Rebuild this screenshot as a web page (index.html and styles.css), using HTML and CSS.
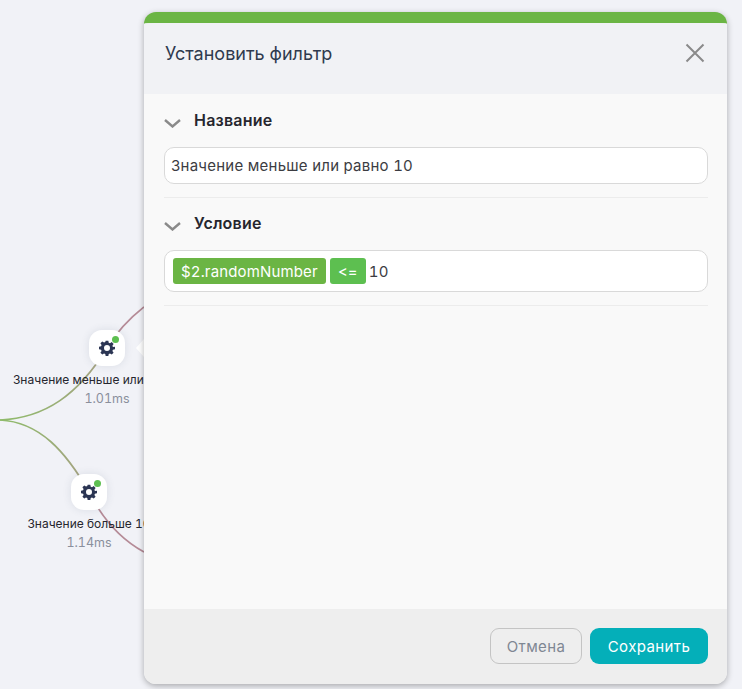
FILE: index.html
```html
<!DOCTYPE html>
<html lang="ru">
<head>
<meta charset="utf-8">
<title>Установить фильтр</title>
<link rel="stylesheet" href="styles.css">
</head>
<body>
<div class="canvas">
  <svg class="edges" width="144" height="689" viewBox="0 0 144 689" fill="none" stroke-width="1.700">
    <defs>
      <linearGradient id="g1" gradientUnits="userSpaceOnUse" x1="0" y1="420" x2="107" y2="348">
        <stop offset="0" stop-color="#8fbb6b"/><stop offset="1" stop-color="#a89f85"/>
      </linearGradient>
      <linearGradient id="g2" gradientUnits="userSpaceOnUse" x1="0" y1="420" x2="89" y2="492">
        <stop offset="0" stop-color="#8fbb6b"/><stop offset="1" stop-color="#a89f85"/>
      </linearGradient>
    </defs>
    <path d="M0 420 C45 418 78 395 107 348" stroke="url(#g1)"/>
    <path d="M0 420 C40 422 66 452 89 492" stroke="url(#g2)"/>
    <path d="M107 348 C118 330 130 318 144 307" stroke="#b58b97"/>
    <path d="M89 492 C104 522 122 540 144 552" stroke="#b58b97"/>
  </svg>

  <div class="node node-a">
    <div class="node-box">
      <svg class="gear" viewBox="0 0 24 24" width="18" height="18"><path fill="#2b3553" fill-rule="evenodd" d="M10 1h4l.6 3.1 1.9.8 2.6-1.8 2.8 2.8-1.8 2.6.8 1.9L24 10v4l-3.1.6-.8 1.9 1.8 2.6-2.8 2.8-2.6-1.8-1.9.8L14 24h-4l-.6-3.1-1.9-.8-2.6 1.8-2.8-2.8 1.8-2.6-.8-1.9L0 14v-4l3.1-.6.8-1.9L2.1 4.900l2.800-2.800 2.600 1.800 1.900-.8zM12 7.500a4.500 4.500 0 1 0 0 9 4.500 4.500 0 0 0 0-9z"/></svg>
      <span class="dot"></span>
    </div>
    <div class="node-name">Значение меньше или равно 10</div>
    <div class="node-time">1.01ms</div>
  </div>

  <div class="node node-b">
    <div class="node-box">
      <svg class="gear" viewBox="0 0 24 24" width="18" height="18"><path fill="#2b3553" fill-rule="evenodd" d="M10 1h4l.6 3.1 1.9.8 2.6-1.8 2.8 2.8-1.8 2.6.8 1.9L24 10v4l-3.1.6-.8 1.9 1.8 2.6-2.8 2.8-2.6-1.8-1.9.8L14 24h-4l-.6-3.1-1.9-.8-2.6 1.8-2.8-2.8 1.8-2.6-.8-1.9L0 14v-4l3.1-.6.8-1.9L2.1 4.900l2.800-2.800 2.600 1.800 1.900-.8zM12 7.500a4.500 4.500 0 1 0 0 9 4.500 4.500 0 0 0 0-9z"/></svg>
      <span class="dot"></span>
    </div>
    <div class="node-name">Значение больше 10</div>
    <div class="node-time">1.14ms</div>
  </div>

  <span class="pointer"></span>

  <section class="panel">
    <header class="panel-head">
      <h1 class="panel-title">Установить фильтр</h1>
      <svg class="close" width="20" height="20" viewBox="0 0 20 20" fill="none" stroke="#8a8a8a" stroke-width="2"><path d="M1.500 1.500 18.500 18.500M18.500 1.500 1.500 18.500"/></svg>
    </header>
    <div class="panel-body">
      <div class="group">
        <div class="group-head">
          <svg class="chev" width="17" height="9" viewBox="0 0 17 9" fill="none" stroke="#8a8a8a" stroke-width="2.400"><path d="M1 1 8.500 7.500 16 1"/></svg>
          <span class="group-title">Название</span>
        </div>
        <div class="field">Значение меньше или равно 10</div>
      </div>
      <div class="group">
        <div class="group-head">
          <svg class="chev" width="17" height="9" viewBox="0 0 17 9" fill="none" stroke="#8a8a8a" stroke-width="2.400"><path d="M1 1 8.500 7.500 16 1"/></svg>
          <span class="group-title group-title-up">Условие</span>
        </div>
        <div class="field field-tags">
          <span class="tag tag-var">$2.randomNumber</span>
          <span class="tag tag-op">&lt;=</span>
          <span class="value">10</span>
        </div>
      </div>
    </div>
    <footer class="panel-foot">
      <button class="btn btn-cancel">Отмена</button>
      <button class="btn btn-save">Сохранить</button>
    </footer>
  </section>
</div>
</body>
</html>
```
FILE: styles.css
```css
* { box-sizing: border-box; }
html, body { margin: 0; height: 100%; }
body { background: #f1f2f7; font-family: Inter, "Noto Sans", sans-serif; font-variant-numeric: tabular-nums; overflow: hidden; }
.canvas { position: relative; width: 742px; height: 689px; overflow: hidden; }
.edges { position: absolute; left: 0; top: 0; }

.node { position: absolute; width: 200px; display: flex; flex-direction: column; align-items: center; }
.node-a { left: 7px; top: 330px; }
.node-b { left: -11px; top: 474px; }
.node-box {
  position: relative; width: 36px; height: 36px; background: #fff; border-radius: 13px;
  display: flex; align-items: center; justify-content: center;
  box-shadow: 0 0 8px rgba(60, 70, 100, .12);
}
.gear { width: 16px; height: 16px; }
.dot { position: absolute; right: 6px; top: 6px; width: 7px; height: 7px; border-radius: 50%; background: #5dbf50; }
.node-name { margin-top: 7px; font-size: 12px; line-height: 14px; color: #26262e; white-space: nowrap; }
.node-time { margin-top: 4px; font-size: 12.500px; line-height: 15px; color: #8a8f9c; }

.pointer {
  position: absolute; left: 136px; top: 339px; width: 0; height: 0;
  border-style: solid; border-width: 9px 8px 9px 0; border-color: transparent #fff transparent transparent;
}

.panel {
  position: absolute; left: 144px; top: 12px; width: 583px; height: 672px;
  display: flex; flex-direction: column; border-top: 11px solid #6bb544;
  border-radius: 12px; overflow: hidden; background: #f9f9f9;
  box-shadow: 0 2px 6px rgba(0, 0, 0, .3);
}
.panel-head {
  height: 71px; flex: none; background: #f1f2f5; display: flex; align-items: flex-start;
  justify-content: space-between; padding: 19px 22px 0 21px;
}
.panel-title { margin: 0; font-size: 18px; line-height: 24px; font-weight: 400; color: #2f3a4e; }
.close { display: block; margin-top: 1px; }
.panel-body { flex: 1; padding: 0 19px 0 20px; }
.group { border-bottom: 1px solid #ececec; padding-bottom: 13px; }
.group-head { height: 53px; display: flex; align-items: center; padding-bottom: 1px; }
.group + .group .group-head { height: 52px; }
.chev { margin-top: 6px; flex: none; }
.group-title { margin-left: 13px; font-size: 16px; letter-spacing: .2px; font-weight: 600; color: #26262e; }
.group-title-up { margin-top: -1px; }
.field {
  min-height: 37px; background: #fff; border: 1px solid #d9d9d9; border-radius: 10px;
  padding: 0 6px; display: flex; align-items: center; font-size: 15px; letter-spacing: .25px; color: #3c3c42;
}
.field-tags { height: 42px; padding: 0 8px; gap: 4px; }
.tag { height: 26px; display: flex; align-items: center; border-radius: 3px; color: #fff; padding: 0 8px; font-size: 15px; letter-spacing: .15px; }
.tag-var { background: #6bb544; }
.tag-op { background: #5dbf50; width: 36px; }
.value { margin-left: -1px; color: #3c3c42; }

.panel-foot {
  height: 75px; flex: none; background: #eeeeee; display: flex; align-items: flex-start;
  justify-content: flex-end; gap: 8px; padding: 19px 19px 0 0;
}
.btn { height: 36px; border-radius: 9px; font-family: inherit; font-size: 15px; letter-spacing: .4px; padding: 0; }
.btn-cancel { width: 92px; background: transparent; border: 1px solid #c4c4c4; color: #7f8793; }
.btn-save { width: 118px; background: #04afb9; border: 0; color: #fff; }
```
